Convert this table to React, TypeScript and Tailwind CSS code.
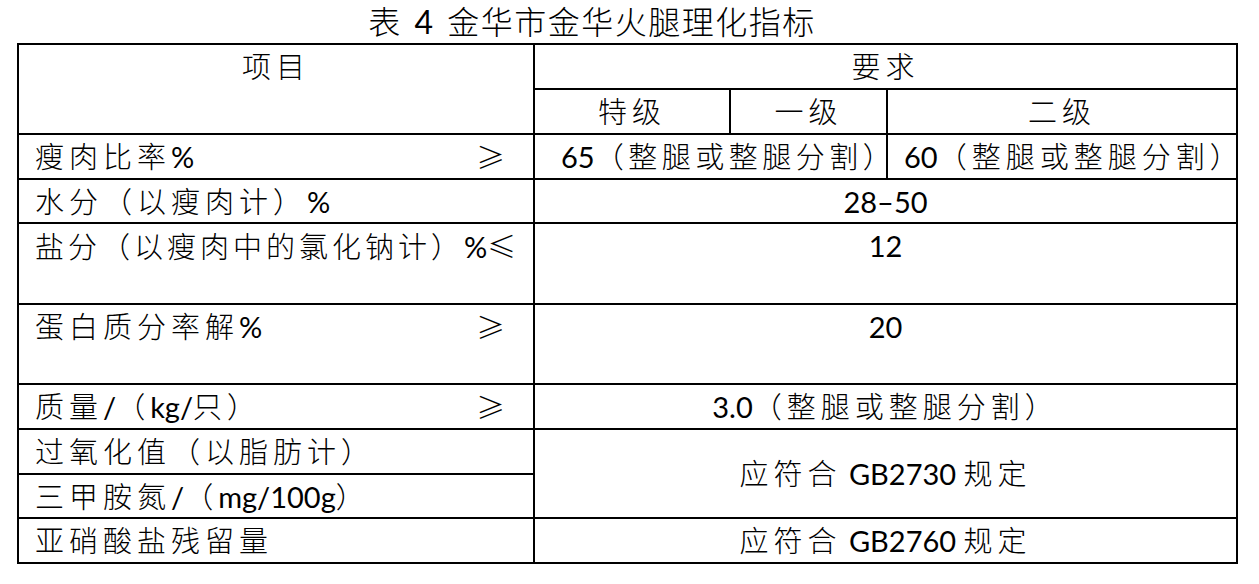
import React from "react";

const CJK_RE = /([\u2E80-\u303F\u3040-\u9FFF\uFF00-\uFFEF]+)/;

function T({ s, wide = "tracking-[5px] font-light" }: { s: string; wide?: string }) {
  const parts = s.split(CJK_RE);
  return (
    <>
      {parts.map((p, i) =>
        p === "" ? null : CJK_RE.test(p) ? (
          <span key={i} className={wide}>
            {p}
          </span>
        ) : (
          <span key={i}>{p}</span>
        )
      )}
    </>
  );
}

function Sym({ c }: { c: string }) {
  return <span className="font-['Noto_Sans_CJK_SC',sans-serif] font-light">{c}</span>;
}

const cell = "bg-white leading-[43px] whitespace-nowrap overflow-visible";

export default function App() {
  return (
    <div className="w-[1259px] h-[584px] bg-white text-black font-['Lato','Noto_Sans_CJK_SC',sans-serif] text-[29px]">
      <div className="h-[43px] flex justify-center pr-[75px] text-[32px] leading-[43px] tracking-[1.5px] [word-spacing:3px] whitespace-pre">
        <span>
          <T s="表 4 金华市金华火腿理化指标" wide="font-light" />
        </span>
      </div>
      <div className="ml-[17px] w-fit bg-black p-[2px] grid gap-[2px] grid-cols-[514px_194px_155px_348px] grid-rows-[43px_43px_43px_42px_79px_78px_43px_43px_42px_43px]">
        <div className={`${cell} row-span-2 text-center`}>
          <T s="项目" />
        </div>
        <div className={`${cell} col-span-3 text-center`}>
          <T s="要求" />
        </div>
        <div className={`${cell} text-center`}>
          <T s="特级" />
        </div>
        <div className={`${cell} text-center`}>
          <T s="一级" />
        </div>
        <div className={`${cell} text-center`}>
          <T s="二级" />
        </div>

        <div className={`${cell} flex justify-between pl-[16px] pr-[28px]`}>
          <span>
            <T s="瘦肉比率%" />
          </span>
          <Sym c="≥" />
        </div>
        <div className={`${cell} col-span-2 pl-[26px]`}>
          <T s="65（整腿或整腿分割）" wide="tracking-[4.5px] font-light" />
        </div>
        <div className={`${cell} pl-[16px]`}>
          <T s="60（整腿或整腿分割）" />
        </div>

        <div className={`${cell} pl-[16px]`}>
          <T s="水分（以瘦肉计）%" />
        </div>
        <div className={`${cell} col-span-3 text-center`}>28–50</div>

        <div className={`${cell} pl-[16px]`}>
          <T s="盐分（以瘦肉中的氯化钠计）%" wide="tracking-[4px] font-light" />
          <Sym c="≤" />
        </div>
        <div className={`${cell} col-span-3 text-center`}>12</div>

        <div className={`${cell} flex justify-between pl-[16px] pr-[28px]`}>
          <span>
            <T s="蛋白质分率解%" />
          </span>
          <Sym c="≥" />
        </div>
        <div className={`${cell} col-span-3 text-center`}>20</div>

        <div className={`${cell} flex justify-between pl-[16px] pr-[28px]`}>
          <span>
            <T s="质量/（kg/只）" />
          </span>
          <Sym c="≥" />
        </div>
        <div className={`${cell} col-span-3 text-center`}>
          <T s="3.0（整腿或整腿分割）" />
        </div>

        <div className={`${cell} pl-[16px]`}>
          <T s="过氧化值（以脂肪计）" />
        </div>
        <div className={`${cell} row-span-2 col-span-3 flex items-center justify-center`}>
          <span>
            <T s="应符合 GB2730 规定" />
          </span>
        </div>
        <div className={`${cell} pl-[16px]`}>
          <T s="三甲胺氮/（mg/100g）" />
        </div>

        <div className={`${cell} pl-[16px]`}>
          <T s="亚硝酸盐残留量" />
        </div>
        <div className={`${cell} col-span-3 text-center`}>
          <T s="应符合 GB2760 规定" />
        </div>
      </div>
    </div>
  );
}
